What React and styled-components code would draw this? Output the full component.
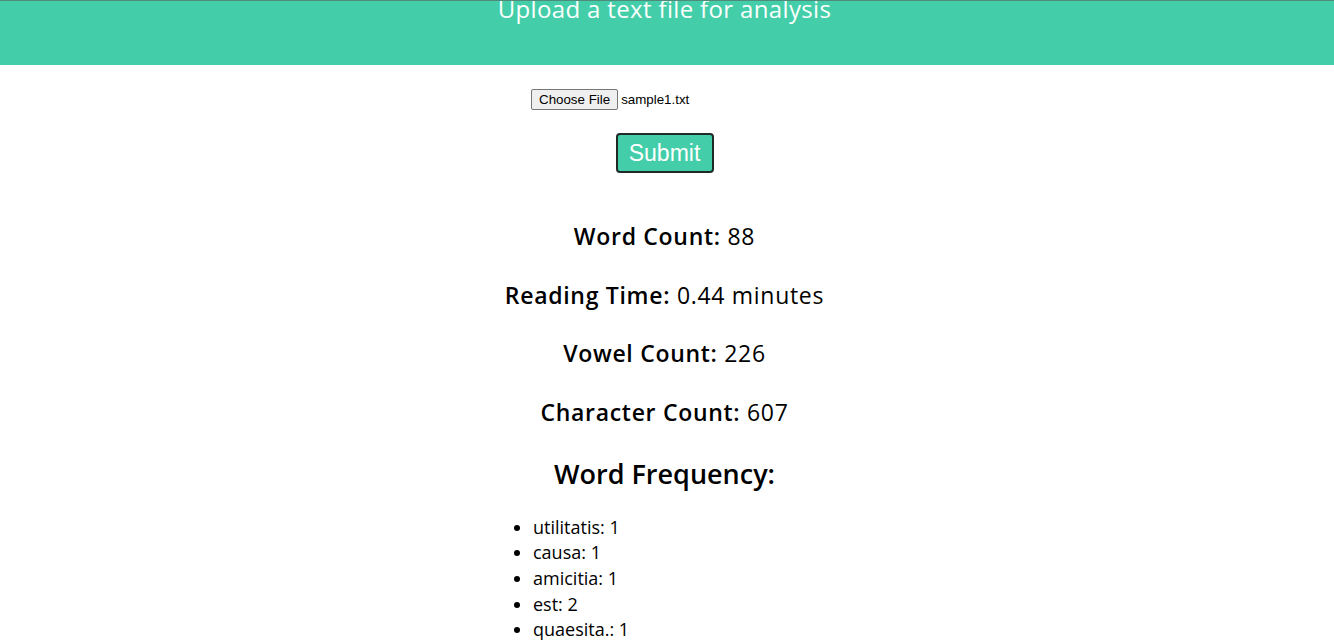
import React from "react";
import styled, { createGlobalStyle } from "styled-components";

const Global = createGlobalStyle`
  html, body { margin: 0; padding: 0; background: #fff; }
  body { font-family: "Open Sans", "Noto Sans", sans-serif; color: #000; }
`;

const Header = styled.header`
  height: 65px;
  padding-right: 5px;
  background: #43cea9;
  border-top: 1px solid #4f8a7a;
  box-sizing: border-box;
  overflow: hidden;
  display: flex;
  justify-content: center;
`;

const Title = styled.h1`
  margin: -9px 0 0;
  font-size: 24px;
  font-weight: 400;
  letter-spacing: 0.35px;
  line-height: 34px;
  color: #fbfffd;
`;

const Main = styled.main`
  display: flex;
  flex-direction: column;
  align-items: center;
  padding: 24px 5px 0 0;
`;

const FileRow = styled.div`
  width: 267px;
  display: flex;
  align-items: center;
  gap: 3px;
  font-family: "Liberation Sans", Arial, sans-serif;
  font-size: 13.33px;
`;

const FileButton = styled.span`
  display: inline-block;
  box-sizing: border-box;
  height: 21px;
  line-height: 19px;
  padding: 0 7px;
  background: #efefef;
  border: 1px solid #767676;
  border-radius: 2px;
  color: #000;
`;

const SubmitButton = styled.button`
  margin-top: 23px;
  width: 98px;
  height: 40px;
  box-sizing: border-box;
  background: #43cea9;
  color: #fff;
  border: 2px solid #1f2a27;
  border-radius: 4px;
  font-family: "Liberation Sans", Arial, sans-serif;
  font-size: 23px;
  padding: 0;
`;

const Stats = styled.section`
  margin-top: 46px;
  display: flex;
  flex-direction: column;
  align-items: center;
  gap: 24.5px;
`;

const Stat = styled.p`
  margin: 0;
  font-size: 23px;
  letter-spacing: 0.7px;
  line-height: 34px;
  b { font-weight: 600; }
`;

const FreqTitle = styled.h2`
  margin: 25px 0 0;
  font-size: 27px;
  font-weight: 600;
  line-height: 40px;
`;

const FreqList = styled.ul`
  align-self: stretch;
  margin: 21px 0 0;
  padding: 0 0 0 533px;
  font-size: 18px;
  line-height: 25.7px;
`;

const stats = [
  ["Word Count:", "88"],
  ["Reading Time:", "0.44 minutes"],
  ["Vowel Count:", "226"],
  ["Character Count:", "607"],
];

const words = [
  ["utilitatis", 1],
  ["causa", 1],
  ["amicitia", 1],
  ["est", 2],
  ["quaesita.", 1],
  ["non", 1],
  ["enim", 1],
];

export default function App() {
  return (
    <>
      <Global />
      <Header>
        <Title>Upload a text file for analysis</Title>
      </Header>
      <Main>
        <FileRow>
          <FileButton>Choose File</FileButton>
          <span>sample1.txt</span>
        </FileRow>
        <SubmitButton>Submit</SubmitButton>
        <Stats>
          {stats.map(([k, v]) => (
            <Stat key={k}>
              <b>{k}</b> {v}
            </Stat>
          ))}
        </Stats>
        <FreqTitle>Word Frequency:</FreqTitle>
        <FreqList>
          {words.map(([w, n]) => (
            <li key={w}>
              {w}: {n}
            </li>
          ))}
        </FreqList>
      </Main>
    </>
  );
}
